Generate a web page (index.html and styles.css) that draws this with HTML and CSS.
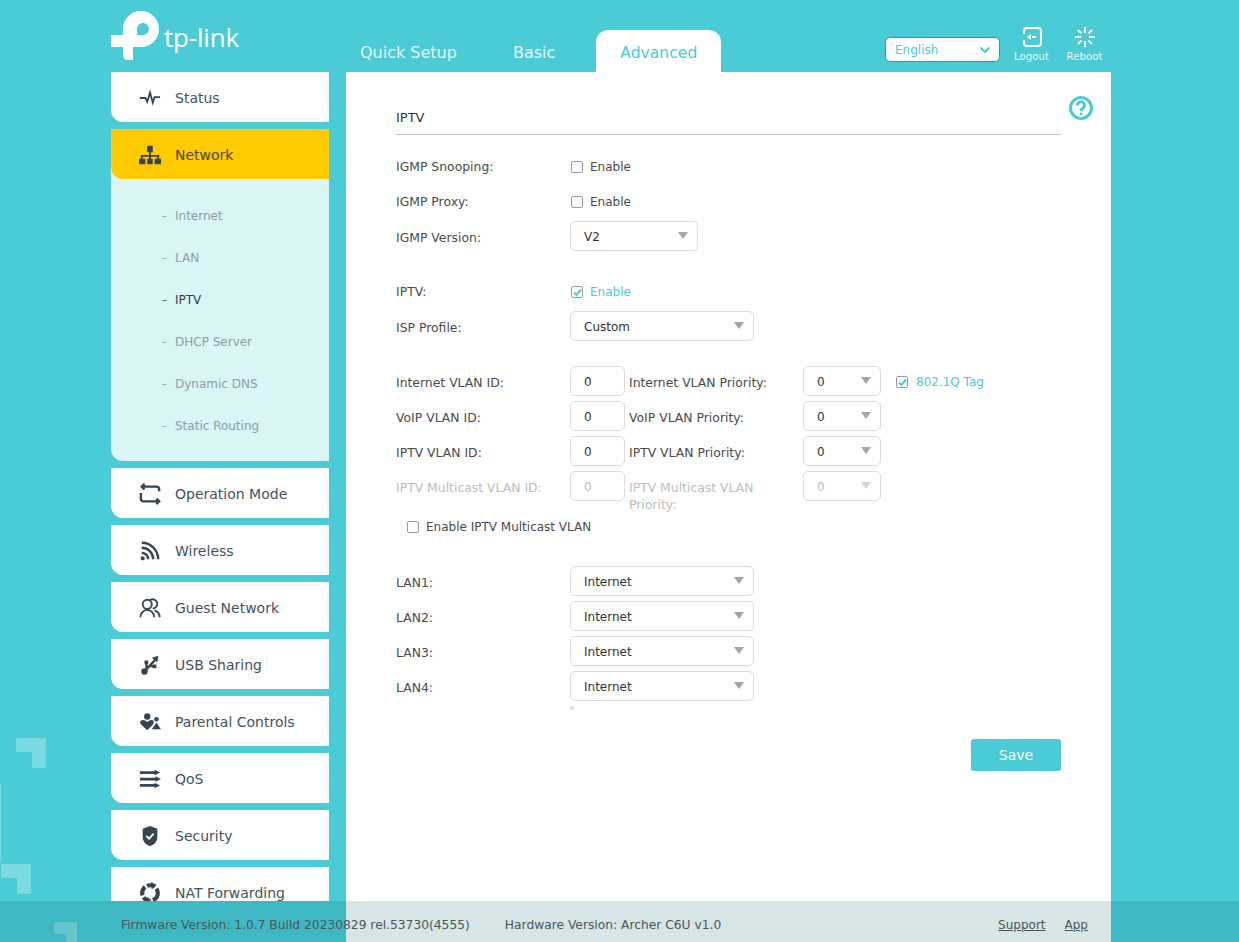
FILE: index.html
```html
<!DOCTYPE html>
<html lang="en">
<head>
  <meta charset="UTF-8" />
  <title>Archer C6U</title>
  <link rel="stylesheet" href="styles.css">
</head>
<body>
  <svg class="deco" width="110" height="942" viewBox="0 0 110 942">
    <path d="M18 738H46V768H34Q32 768 32 766V752H18Q16 752 16 750V740Q16 738 18 738Z" />
    <path d="M0 784H1V862H0Z" />
    <path d="M1 864H31V894H19Q17 894 17 892V878H3Q1 878 1 876Z" />
    <path d="M56 922H77V942H66V934H56Q54 934 54 932V924Q54 922 56 922Z" />
  </svg>

  <div class="page">
    <header class="top">
      <div class="logo">
        <svg class="logo-mark" width="48" height="49" viewBox="0 0 48 49">
          <path fill-rule="evenodd" d="M0 24H12V18A18 18 0 0 1 30 0A18 18 0 0 1 30 36H22V49H17Q12 49 12 44V36H0ZM26 18V24H32A6 6 0 0 0 32 12A6 6 0 0 0 26 18Z" />
        </svg>
        <span class="logo-text">tp-link</span>
      </div>
      <nav class="tabs">
        <a class="tab">Quick Setup</a>
        <a class="tab">Basic</a>
        <a class="tab tab-active">Advanced</a>
      </nav>
      <div class="actions">
        <div class="lang">
          <span>English</span>
          <svg width="12" height="8" viewBox="0 0 12 8"><path d="M1.500 1.500L6 6L10.500 1.500" /></svg>
        </div>
        <a class="action">
          <svg width="20" height="20" viewBox="0 0 20 20">
            <path class="line" d="M2 7V4Q2 1 5 1H16Q19 1 19 4V16Q19 19 16 19H5Q2 19 2 16V13" />
            <path class="fill" d="M5 10L9 7V13Z" />
            <path class="fill" d="M10 9H14V11H10Z" />
          </svg>
          <span>Logout</span>
        </a>
        <a class="action">
          <svg width="20" height="20" viewBox="0 0 20 20">
            <path class="line" d="M10 0V6M10 14V20M0 10H6M14 10H20M3 3L6.500 6.500M13.500 13.500L17 17M17 3L13.500 6.500M6.500 13.500L3 17" />
          </svg>
          <span>Reboot</span>
        </a>
      </div>
    </header>

    <div class="columns">
      <aside class="sidebar">
        <a class="nav-item">
          <svg class="nav-icon" viewBox="0 0 24 24"><path class="stroke" d="M1 12H7L9 16L12 6L15 17L17 11H23" /></svg>
          Status
        </a>

        <div class="nav-group">
          <a class="nav-item nav-active">
            <svg class="nav-icon" viewBox="0 0 24 24"><path class="solid" d="M9 2H15V9H13V12H22V16H24V22H17V16H20V14H13V16H15V22H9V16H11V14H4V16H7V22H0V16H2V12H11V9H9Z" /></svg>
            Network
          </a>
          <ul class="sub-nav">
            <li>Internet</li>
            <li>LAN</li>
            <li class="current">IPTV</li>
            <li>DHCP Server</li>
            <li>Dynamic DNS</li>
            <li>Static Routing</li>
          </ul>
        </div>

        <a class="nav-item">
          <svg class="nav-icon" viewBox="0 0 24 24">
            <path class="stroke thick" d="M6 1L3 4L6 7M4 4H19Q22 4 22 7V9M19 23L22 20L19 17M20 20H5Q2 20 2 17V11" />
          </svg>
          Operation Mode
        </a>
        <a class="nav-item">
          <svg class="nav-icon" viewBox="0 0 24 24">
            <path class="stroke thick" d="M3 3A18 18 0 0 1 21 21M3 8.500A12.500 12.500 0 0 1 15.500 21M3 14A7 7 0 0 1 10 21" />
            <path class="solid" d="M2 18H6V22H2Z" />
          </svg>
          Wireless
        </a>
        <a class="nav-item">
          <svg class="nav-icon" viewBox="0 0 24 24">
            <circle class="stroke" cx="9" cy="8" r="5" />
            <path class="stroke" d="M12 3.500A5 5 0 1 1 15 12.500M1.500 22A8 8 0 0 1 9 14A8 8 0 0 1 16.500 22M17 14.500A8 8 0 0 1 22.500 22" />
          </svg>
          Guest Network
        </a>
        <a class="nav-item">
          <svg class="nav-icon" viewBox="0 0 24 24">
            <circle class="solid" cx="6" cy="19" r="3.500" />
            <path class="stroke thick" d="M6 19L18 6M8.500 16L8 10.500M12 12.500L16.500 14" />
            <path class="solid" d="M21 2L20 9L14 4Z M6 7H10V11H6Z M15 11.500H19V15.500H15Z" />
          </svg>
          USB Sharing
        </a>
        <a class="nav-item">
          <svg class="nav-icon" viewBox="0 0 24 24">
            <circle class="solid" cx="9" cy="6" r="3.500" />
            <circle class="solid" cx="19" cy="9" r="2.500" />
            <path class="solid" d="M9 21L2 14.500Q0 11 3 10Q6 9 9 12Q12 9 15 10Q17 11 15.500 14.500Z" />
            <path class="solid" d="M14 20L19 12.500L24 20Z" />
          </svg>
          Parental Controls
        </a>
        <a class="nav-item">
          <svg class="nav-icon" viewBox="0 0 24 24">
            <path class="stroke wide" d="M1 5H19M1 12H19M1 19H19" />
            <path class="solid" d="M17 2L23 5L17 8Z M18 9L24 12L18 15Z M17 16L23 19L17 22Z" />
          </svg>
          QoS
        </a>
        <a class="nav-item">
          <svg class="nav-icon" viewBox="0 0 24 24">
            <path class="solid" d="M12 1L20 4V13Q20 20 12 23Q4 20 4 13V4Z" />
            <path class="tick" d="M8 12L11 15L16 9.500" />
          </svg>
          Security
        </a>
        <a class="nav-item">
          <svg class="nav-icon" viewBox="0 0 24 24">
            <circle class="ring" cx="12" cy="12" r="8.500" />
            <path class="solid" d="M13 0L19 3L14 8Z M11 24L5 21L10 16Z" />
          </svg>
          NAT Forwarding
        </a>
      </aside>

      <main class="content">
        <svg class="help" width="26" height="26" viewBox="0 0 26 26">
          <circle cx="13" cy="13" r="10.500" />
          <path d="M9.500 10.500A3.500 3.500 0 1 1 14.500 13.500Q13 14.300 13 16" />
          <circle class="dot" cx="13" cy="19" r="1.400" />
        </svg>

        <h2 class="title">IPTV</h2>

        <section class="block">
          <div class="row">
            <label class="field-label">IGMP Snooping:</label>
            <span class="check"><i class="box"></i>Enable</span>
          </div>
          <div class="row">
            <label class="field-label">IGMP Proxy:</label>
            <span class="check"><i class="box"></i>Enable</span>
          </div>
          <div class="row row-input">
            <label class="field-label">IGMP Version:</label>
            <div class="select select-md">V2</div>
          </div>
        </section>

        <section class="block">
          <div class="row">
            <label class="field-label">IPTV:</label>
            <span class="check check-on"><i class="box"><svg width="9" height="9" viewBox="0 0 9 9"><path d="M1 4.500L3.500 7L8 1.500" /></svg></i>Enable</span>
          </div>
          <div class="row row-input">
            <label class="field-label">ISP Profile:</label>
            <div class="select select-lg">Custom</div>
          </div>
        </section>

        <section class="block">
          <div class="row row-input">
            <label class="field-label">Internet VLAN ID:</label>
            <input class="num" type="text" value="0" />
            <label class="field-label">Internet VLAN Priority:</label>
            <div class="select select-sm">0</div>
            <span class="check check-on check-tag"><i class="box"><svg width="9" height="9" viewBox="0 0 9 9"><path d="M1 4.500L3.500 7L8 1.500" /></svg></i>802.1Q Tag</span>
          </div>
          <div class="row row-input">
            <label class="field-label">VoIP VLAN ID:</label>
            <input class="num" type="text" value="0" />
            <label class="field-label">VoIP VLAN Priority:</label>
            <div class="select select-sm">0</div>
          </div>
          <div class="row row-input">
            <label class="field-label">IPTV VLAN ID:</label>
            <input class="num" type="text" value="0" />
            <label class="field-label">IPTV VLAN Priority:</label>
            <div class="select select-sm">0</div>
          </div>
          <div class="row row-input row-off">
            <label class="field-label">IPTV Multicast VLAN ID:</label>
            <input class="num" type="text" value="0" disabled />
            <label class="field-label wrap">IPTV Multicast VLAN Priority:</label>
            <div class="select select-sm">0</div>
          </div>
          <div class="row row-multicast">
            <span class="check"><i class="box"></i>Enable IPTV Multicast VLAN</span>
          </div>
        </section>

        <section class="block">
          <div class="row row-input">
            <label class="field-label">LAN1:</label>
            <div class="select select-lg">Internet</div>
          </div>
          <div class="row row-input">
            <label class="field-label">LAN2:</label>
            <div class="select select-lg">Internet</div>
          </div>
          <div class="row row-input">
            <label class="field-label">LAN3:</label>
            <div class="select select-lg">Internet</div>
          </div>
          <div class="row row-input">
            <label class="field-label">LAN4:</label>
            <div class="select select-lg">Internet</div>
          </div>
          <div class="tiny-dot"></div>
        </section>

        <div class="form-foot">
          <button class="save" type="button">Save</button>
        </div>
      </main>
    </div>
  </div>

  <footer class="foot">
    <span class="foot-text">Firmware Version: 1.0.7 Build 20230829 rel.53730(4555)</span>
    <span class="foot-text foot-hw">Hardware Version: Archer C6U v1.0</span>
    <a class="foot-link foot-support">Support</a>
    <a class="foot-link">App</a>
  </footer>
</body>
</html>
```

FILE: styles.css
```css
html,
body {
  margin: 0;
  padding: 0;
  height: 942px;
  overflow: hidden;
}

body {
  background: #4acbd6;
  font-family: "DejaVu Sans", sans-serif;
  font-size: 12px;
  color: #4a4a4a;
  position: relative;
}

.deco {
  position: absolute;
  left: 0;
  top: 0;
}

.deco path {
  fill: #fff;
  fill-opacity: 0.27;
}

.page {
  position: relative;
  width: 1000px;
  margin-left: 111px;
}

/* header */
.top {
  height: 72px;
  display: flex;
}

.logo {
  width: 235px;
  padding-top: 11px;
  display: flex;
  align-items: flex-start;
  box-sizing: border-box;
}

.logo-mark {
  fill: #fff;
  flex: none;
}

.logo-text {
  font-family: "Open Sans", sans-serif;
  font-size: 26px;
  line-height: 30px;
  color: #fff;
  margin: 11px 0 0 5px;
  letter-spacing: -0.2px;
}

.tabs {
  display: flex;
  align-items: flex-end;
}

.tab {
  height: 42px;
  line-height: 45px;
  font-size: 16px;
  color: #e4f8fa;
  padding: 0 14px;
  margin-right: 28px;
}

.tab-active {
  width: 125px;
  box-sizing: border-box;
  padding: 0;
  margin: 0 0 0 -1px;
  text-align: center;
  line-height: 46px;
  font-size: 15.600px;
  background: #fff;
  color: #4acbd6;
  border-radius: 12px 12px 0 0;
}

.actions {
  margin-left: auto;
  display: flex;
  align-items: flex-start;
}

.lang {
  width: 115px;
  height: 25px;
  box-sizing: border-box;
  margin-top: 37px;
  margin-right: 5px;
  padding: 0 9px;
  background: #fff;
  border: 1px solid #1aa3ad;
  border-radius: 5px;
  color: #4acbd6;
  display: flex;
  align-items: center;
  justify-content: space-between;
}

.lang svg {
  fill: none;
  stroke: #4acbd6;
  stroke-width: 2;
  margin-right: -1px;
}

.action {
  width: 53px;
  padding-top: 27px;
  display: flex;
  flex-direction: column;
  align-items: center;
  font-size: 10.200px;
  color: #e4f8fa;
}

.action span {
  margin-top: 4px;
}

.action .line {
  fill: none;
  stroke: #fff;
  stroke-width: 2;
}

.action .fill {
  fill: #fff;
}

.columns {
  display: flex;
  gap: 17px;
}

/* sidebar */
.sidebar {
  width: 218px;
  height: 829px;
  overflow: hidden;
  flex: none;
  display: flex;
  flex-direction: column;
  gap: 7px;
}

.nav-item {
  height: 50px;
  flex: none;
  box-sizing: border-box;
  padding: 2px 0 0 28px;
  display: flex;
  align-items: center;
  gap: 14px;
  background: #fff;
  border-bottom-left-radius: 12px;
  font-size: 14px;
  color: #44525c;
}

.nav-active {
  background: #ffcb00;
  color: #494a33;
}

.nav-icon {
  width: 22px;
  height: 22px;
  flex: none;
}

.nav-icon .stroke {
  fill: none;
  stroke: #36454f;
  stroke-width: 2;
}

.nav-icon .thick {
  stroke-width: 2.600;
}

.nav-icon .wide {
  stroke-width: 3;
}

.nav-icon .solid {
  fill: #36454f;
}

.nav-icon .ring {
  fill: none;
  stroke: #36454f;
  stroke-width: 4.500;
  stroke-dasharray: 10 2.500 9 2.500 10 2.500 9 2.500;
}

.nav-icon .tick {
  fill: none;
  stroke: #fff;
  stroke-width: 2;
}

.nav-group {
  background: #d9f5f6;
  border-bottom-left-radius: 12px;
  flex: none;
}

.sub-nav {
  list-style: none;
  margin: 0;
  padding: 16px 0 14px 64px;
}

.sub-nav li {
  height: 42px;
  line-height: 42px;
  font-size: 12px;
  color: #8e9ea3;
  position: relative;
}

.sub-nav li::before {
  content: "–";
  position: absolute;
  left: -13px;
  font-size: 10px;
}

.sub-nav .current {
  color: #33424b;
}

/* main panel */
.content {
  position: relative;
  width: 765px;
  height: 870px;
  box-sizing: border-box;
  padding: 0 50px;
  background: #fff;
}

.help {
  position: absolute;
  left: 722px;
  top: 23px;
  fill: none;
  stroke: #4acbd6;
  stroke-width: 3;
}

.help .dot {
  fill: #4acbd6;
  stroke: none;
}

.title {
  margin: 0 0 16px;
  padding: 37px 0 8px;
  font-size: 13px;
  font-weight: normal;
  color: #333;
  border-bottom: 1px solid #c4c4c4;
  line-height: 17px;
}

.block {
  margin-bottom: 25px;
}

.row {
  display: flex;
  align-items: center;
  height: 30px;
  margin-bottom: 5px;
}

.field-label {
  width: 174px;
  flex: none;
  font-size: 12.400px;
}

.row-input .field-label {
  position: relative;
  top: 1px;
}

.select {
  box-sizing: border-box;
  height: 30px;
  line-height: 30px;
  padding-left: 13px;
  background: #fff;
  border: 1px solid #dcdcdc;
  border-radius: 5px;
  color: #333;
  position: relative;
}

.select::after {
  content: "";
  position: absolute;
  right: 9px;
  top: 10px;
  border-style: solid;
  border-width: 7px 5.500px 0;
  border-color: #a5a5a5 transparent transparent;
}

.select-sm {
  width: 78px;
}

.select-md {
  width: 128px;
}

.select-lg {
  width: 184px;
}

.num {
  box-sizing: border-box;
  width: 55px;
  height: 30px;
  margin-right: 4px;
  padding: 2px 0 0 13px;
  border: 1px solid #dcdcdc;
  border-radius: 5px;
  font: inherit;
  color: #333;
  outline: none;
  background: #fff;
}

.check {
  display: inline-flex;
  align-items: center;
  line-height: 16px;
  gap: 7px;
  position: relative;
  top: 1px;
}

.field-label + .check {
  margin-left: 1px;
}

.box {
  width: 10px;
  height: 10px;
  border: 1px solid #9a9a9a;
  border-radius: 2px;
  display: flex;
  align-items: center;
  justify-content: center;
  flex: none;
}

.box svg {
  fill: none;
  stroke: #4acbd6;
  stroke-width: 2;
}

.check-on {
  color: #4acbd6;
}

.check-tag {
  margin-left: 15px;
  gap: 8px;
}

.row-off .field-label,
.row-off .select,
.row-off .num {
  color: #bdbdbd;
}

.row-off .select::after {
  border-top-color: #d4d4d4;
}

.row-off .field-label.wrap {
  top: 10px;
  line-height: 17px;
  padding-right: 30px;
  box-sizing: border-box;
}

.row-multicast {
  margin-top: 10px;
  padding-left: 11px;
}

.tiny-dot {
  width: 2px;
  height: 2px;
  margin: 1px 0 0 174px;
  border: 1px solid #ccc;
  border-radius: 50%;
}

.form-foot {
  display: flex;
  justify-content: flex-end;
  margin-top: 29px;
}

.save {
  width: 90px;
  height: 32px;
  border: none;
  border-radius: 3px;
  background: #4acbd6;
  color: #fff;
  font: inherit;
  font-size: 14px;
}

/* translucent footer strip */
.foot {
  position: absolute;
  left: 0;
  right: 0;
  bottom: 0;
  height: 41px;
  box-sizing: border-box;
  padding: 6px 151px 0 121px;
  display: flex;
  align-items: center;
  background: rgba(0, 90, 105, 0.155);
  color: #4d5558;
}

.foot-text {
  font-size: 12.270px;
}

.foot-hw {
  margin-left: 35px;
}

.foot-link {
  text-decoration: underline;
}

.foot-support {
  margin-left: auto;
  margin-right: 19px;
}
```
